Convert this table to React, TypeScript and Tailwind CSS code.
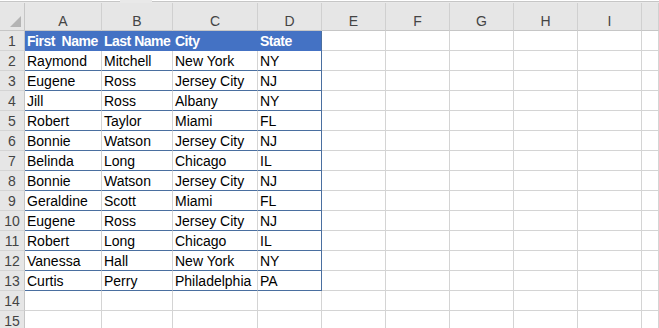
import React from "react";

const cols = ["A", "B", "C", "D", "E", "F", "G", "H", "I", ""];

const data = [
  ["First  Name", "Last Name", "City", "State"],
  ["Raymond", "Mitchell", "New York", "NY"],
  ["Eugene", "Ross", "Jersey City", "NJ"],
  ["Jill", "Ross", "Albany", "NY"],
  ["Robert", "Taylor", "Miami", "FL"],
  ["Bonnie", "Watson", "Jersey City", "NJ"],
  ["Belinda", "Long", "Chicago", "IL"],
  ["Bonnie", "Watson", "Jersey City", "NJ"],
  ["Geraldine", "Scott", "Miami", "FL"],
  ["Eugene", "Ross", "Jersey City", "NJ"],
  ["Robert", "Long", "Chicago", "IL"],
  ["Vanessa", "Hall", "New York", "NY"],
  ["Curtis", "Perry", "Philadelphia", "PA"],
];

const totalRows = 15;

function Cell({ row, col }: { row: number; col: number }) {
  const inTable = row < data.length && col < 4;
  if (!inTable) {
    return <div className="h-[20px] border-r border-b border-[#d4d4d4] bg-white" />;
  }
  const text = data[row][col];
  const header = row === 0;
  const lastCol = col === 3;
  return (
    <div
      className={
        "h-[20px] border-r border-b pl-[2px] pt-[2px] leading-[17px] whitespace-pre overflow-hidden " +
        (header
          ? "bg-[#4472c4] text-white font-bold tracking-[-0.5px] border-b-[#4472c4] " +
            (lastCol ? "border-r-[#4a6fa0]" : "border-r-[#4472c4]")
          : "bg-white text-black border-b-[#4a6fa0] " +
            (lastCol ? "border-r-[#4a6fa0]" : "border-r-[#d4d4d4]"))
      }
    >
      {text}
    </div>
  );
}

export default function App() {
  return (
    <div
      className="w-[659px] h-[328px] overflow-hidden bg-white text-[14px]"
      style={{ fontFamily: '"Liberation Sans", Arial, sans-serif' }}
    >
      {/* formula bar remnant */}
      <div className="h-[3px] bg-[#e9e9e9] flex">
        <div className="w-[120px] h-[2px] bg-white border-b border-[#c6c6c6]" />
        <div className="w-[32px]" />
        <div className="flex-1 h-[2px] bg-white border-b border-[#c6c6c6]" />
      </div>

      <div className="grid grid-cols-[25px_77px_71px_85px_64px_64px_64px_64px_64px_64px_1fr]">
        {/* column headers */}
        <div className="relative h-[28px] bg-[#e6e6e6] border-r border-b border-[#c6c6c6]">
          <svg className="absolute right-[3px] bottom-[3px]" width="11" height="11" viewBox="0 0 11 11">
            <polygon points="11,0 11,11 0,11" fill="#b4b4b4" />
          </svg>
        </div>
        {cols.map((c, i) => (
          <div
            key={i}
            className="h-[28px] bg-[#e6e6e6] border-r border-b border-r-[#d0d0d0] border-b-[#c6c6c6] text-center text-[#444] pt-[10px] leading-[16px]"
          >
            {c}
          </div>
        ))}

        {Array.from({ length: totalRows }).map((_, r) => (
          <React.Fragment key={r}>
            <div className="h-[20px] bg-[#e6e6e6] border-r border-b border-r-[#c6c6c6] border-b-[#d4d4d4] text-center pt-[2px] leading-[17px] text-[#444]">
              {r + 1}
            </div>
            {cols.map((_, c) => (
              <Cell key={c} row={r} col={c} />
            ))}
          </React.Fragment>
        ))}
      </div>
    </div>
  );
}
